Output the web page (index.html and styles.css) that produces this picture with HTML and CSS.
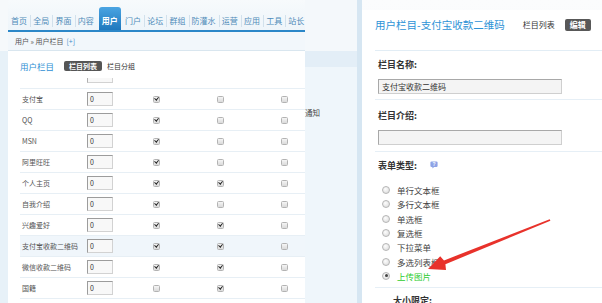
FILE: index.html
```html
<!DOCTYPE html>
<html lang="zh-CN">
<head>
<meta charset="utf-8">
<title>用户栏目</title>
<link rel="stylesheet" href="styles.css">
</head>
<body>
<div class="desk">
  <section class="left">
    <div class="win">
      <nav class="tabs">
        <a class="tab first">首页</a>
        <a class="tab">全局</a>
        <a class="tab">界面</a>
        <a class="tab">内容</a>
        <a class="tab active">用户</a>
        <a class="tab first">门户</a>
        <a class="tab">论坛</a>
        <a class="tab">群组</a>
        <a class="tab">防灌水</a>
        <a class="tab">运营</a>
        <a class="tab">应用</a>
        <a class="tab">工具</a>
        <a class="tab">站长</a>
      </nav>
      <div class="crumb">用户 » 用户栏目 <span class="plus">[+]</span></div>
      <div class="head">
        <span class="h-title">用户栏目</span>
        <span class="badge">栏目列表</span>
        <span class="h-link">栏目分组</span>
      </div>
      <div class="grid">
        <div class="row part"><span></span><span class="stub"></span></div>
        <div class="row"><span class="lbl">支付宝</span><span class="num">0</span><span></span><span class="c"><i class="cb on"></i></span><span class="c"><i class="cb"></i></span><span class="c"><i class="cb"></i></span></div>
        <div class="row"><span class="lbl">QQ</span><span class="num">0</span><span></span><span class="c"><i class="cb on"></i></span><span class="c"><i class="cb"></i></span><span class="c"><i class="cb"></i></span></div>
        <div class="row"><span class="lbl">MSN</span><span class="num">0</span><span></span><span class="c"><i class="cb on"></i></span><span class="c"><i class="cb"></i></span><span class="c"><i class="cb"></i></span></div>
        <div class="row"><span class="lbl">阿里旺旺</span><span class="num">0</span><span></span><span class="c"><i class="cb on"></i></span><span class="c"><i class="cb"></i></span><span class="c"><i class="cb"></i></span></div>
        <div class="row"><span class="lbl">个人主页</span><span class="num">0</span><span></span><span class="c"><i class="cb on"></i></span><span class="c"><i class="cb on"></i></span><span class="c"><i class="cb"></i></span></div>
        <div class="row"><span class="lbl">自我介绍</span><span class="num">0</span><span></span><span class="c"><i class="cb on"></i></span><span class="c"><i class="cb"></i></span><span class="c"><i class="cb"></i></span></div>
        <div class="row"><span class="lbl">兴趣爱好</span><span class="num">0</span><span></span><span class="c"><i class="cb on"></i></span><span class="c"><i class="cb on"></i></span><span class="c"><i class="cb"></i></span></div>
        <div class="row hl"><span class="lbl">支付宝收款二维码</span><span class="num">0</span><span></span><span class="c"><i class="cb on"></i></span><span class="c"><i class="cb on"></i></span><span class="c"><i class="cb"></i></span></div>
        <div class="row"><span class="lbl">微信收款二维码</span><span class="num">0</span><span></span><span class="c"><i class="cb on"></i></span><span class="c"><i class="cb on"></i></span><span class="c"><i class="cb"></i></span></div>
        <div class="row"><span class="lbl">国籍</span><span class="num">0</span><span></span><span class="c"><i class="cb"></i></span><span class="c"><i class="cb on"></i></span><span class="c"><i class="cb"></i></span></div>
      </div>
    </div>
  </section>

  <section class="mid">
    <div class="mid-top"></div>
    <div class="mid-band"></div>
    <div class="mid-body"><span class="notice">通知</span></div>
  </section>

  <section class="right">
    <div class="panel">
      <div class="p-head">
        <span class="p-title">用户栏目-支付宝收款二维码</span>
        <span class="p-link">栏目列表</span>
        <span class="p-badge">编辑</span>
      </div>
      <div class="sec s1">
        <div class="f-label">栏目名称:</div>
        <div class="txt">支付宝收款二维码</div>
      </div>
      <div class="sec s2">
        <div class="f-label">栏目介绍:</div>
        <div class="txt"></div>
      </div>
      <div class="sec s3">
        <div class="f-label">表单类型:
          <svg class="help" width="8" height="8" viewBox="0 0 8 8"><path d="M1.6 0.4h4.8a1.2 1.2 0 0 1 1.2 1.2v3.2a1.2 1.2 0 0 1-1.2 1.2H4.2L2.4 7.6V6H1.6A1.2 1.2 0 0 1 0.4 4.8V1.6A1.2 1.2 0 0 1 1.6 0.4z" fill="#8ea3e6"/><text x="4" y="5" font-size="5" font-weight="bold" fill="#fff" text-anchor="middle" font-family="Liberation Sans, sans-serif">?</text></svg>
        </div>
        <div class="opts">
          <div class="opt"><i class="radio"></i>单行文本框</div>
          <div class="opt"><i class="radio"></i>多行文本框</div>
          <div class="opt"><i class="radio"></i>单选框</div>
          <div class="opt"><i class="radio"></i>复选框</div>
          <div class="opt"><i class="radio"></i>下拉菜单</div>
          <div class="opt"><i class="radio"></i>多选列表框</div>
          <div class="opt sel"><i class="radio on"></i>上传图片</div>
        </div>
      </div>
      <div class="sec s4">
        <div class="f-label sub">大小限定:</div>
      </div>
    </div>
  </section>

  <svg class="arrow" width="602" height="303" viewBox="0 0 602 303">
    <polygon points="428,269 440.2,256.2 444,260.4 549.7,219.3 550.4,220.7 445.4,264.2 446,270" fill="#e8322b"/>
  </svg>
</div>
</body>
</html>
```
FILE: styles.css
```css
html, body {
  margin: 0;
  padding: 0;
}
body {
  font-family: "Noto Sans CJK SC", "Noto Sans", sans-serif;
  width: 602px;
  height: 303px;
  overflow: hidden;
  background: #eef5fa;
}
.desk {
  position: relative;
  display: flex;
  width: 602px;
  height: 303px;
  overflow: hidden;
  background: #eef5fa;
}

/* ---------- left window ---------- */
.left {
  width: 305px;
  flex: none;
  box-sizing: border-box;
  padding-left: 8px;
  background: linear-gradient(#f6f9fb 0 51px, #e7f1f8 51px);
  overflow: hidden;
}
.win {
  height: 100%;
  background: #fff;
  display: flex;
  flex-direction: column;
}
.tabs {
  display: flex;
  align-items: flex-end;
  height: 32px;
  box-sizing: border-box;
  padding-top: 7px;
  background: linear-gradient(#f7fafc, #eef5fa);
  border-bottom: 2px solid #2b87c8;
}
.tab {
  height: 23px;
  box-sizing: border-box;
  display: flex;
  align-items: center;
  padding: 5px 3.1px 0;
  font-size: 8px;
  line-height: 1;
  color: #4f8bb9;
  white-space: nowrap;
  background: linear-gradient(#d2e1ec, #d2e1ec) 0 8px / 1px 12px no-repeat;
}
.tab.first {
  background: none;
}
.tab.active {
  margin: 0 1px 0 2px;
  color: #fff;
  font-weight: bold;
  border-radius: 3px 3px 0 0;
  background: linear-gradient(#4aa4e2, #1f78bd);
}
.crumb {
  height: 19px;
  box-sizing: border-box;
  display: flex;
  align-items: center;
  gap: 3px;
  padding-left: 7px;
  background: #f2f7fb;
  border-bottom: 1px solid #d9e6ef;
  font-size: 7px;
  color: #555;
}
.plus {
  color: #3a8cc9;
}
.head {
  height: 27px;
  box-sizing: border-box;
  display: flex;
  align-items: center;
  padding: 3px 0 0 12px;
}
.h-title {
  font-size: 8.5px;
  color: #2e8fd4;
}
.badge {
  margin-left: 10px;
  padding: 0 5px;
  height: 10px;
  line-height: 10px;
  border-radius: 2px;
  background: #555;
  color: #fff;
  font-size: 7px;
  font-weight: bold;
}
.h-link {
  margin-left: 5px;
  font-size: 7px;
  color: #333;
}
.row {
  display: grid;
  grid-template-columns: 65px 26px 11px 64px 64px 64px;
  align-items: center;
  height: 21px;
  box-sizing: border-box;
  margin-left: 12px;
  padding-left: 2px;
  border-bottom: 1px solid #e7eff5;
}
.row.part {
  height: 11px;
  align-items: start;
}
.stub {
  height: 5px;
  box-sizing: border-box;
  border: 1px solid #d2d2d2;
  border-top: none;
  border-left-color: #b0b0b0;
  background: #f8f8f8;
}
.row.hl {
  background: #f0f6fb;
}
.lbl {
  font-size: 7px;
  color: #555;
  white-space: nowrap;
}
.num {
  height: 14px;
  box-sizing: border-box;
  border: 1px solid;
  border-color: #9c9c9c #d2d2d2 #d2d2d2 #9c9c9c;
  background: #f8f8f8;
  padding-left: 2px;
  font-size: 7px;
  line-height: 12px;
  color: #333;
}
.c {
  display: flex;
  justify-content: center;
}
.cb {
  position: relative;
  width: 7px;
  height: 7px;
  box-sizing: border-box;
  border: 1px solid #b3b3b3;
  border-radius: 1.5px;
  background: linear-gradient(#f5f5f5, #dadada);
}
.cb.on::after {
  content: "";
  position: absolute;
  left: 1.6px;
  top: -0.2px;
  width: 1.6px;
  height: 3.4px;
  border: solid #222;
  border-width: 0 1.3px 1.3px 0;
  transform: rotate(40deg);
}

/* ---------- background page strip ---------- */
.mid {
  width: 52px;
  flex: none;
  display: flex;
  flex-direction: column;
  background: #eff6fb;
}
.mid-top {
  height: 51px;
  background: #f4f8fb;
}
.mid-band {
  height: 16px;
  background: #e3eef7;
}
.mid-body {
  padding-top: 42px;
}
.notice {
  display: block;
  font-size: 7.5px;
  line-height: 8px;
  color: #444;
}

/* ---------- right window ---------- */
.right {
  flex: 1;
  display: flex;
  flex-direction: column;
  padding-top: 10px;
  border-left: 5px solid #d6e6f2;
  background: linear-gradient(#fbfcfd, #eef3f7);
}
.panel {
  flex: 1;
  background: #fff;
  padding-left: 13px;
}
.p-head {
  height: 41px;
  box-sizing: border-box;
  display: flex;
  align-items: flex-start;
  padding-top: 9px;
  border-bottom: 1px solid #e2edf5;
}
.p-title {
  font-size: 10.5px;
  line-height: 12px;
  color: #2d92d6;
  white-space: nowrap;
}
.p-link {
  margin-left: 18px;
  font-size: 8px;
  line-height: 12px;
  color: #333;
}
.p-badge {
  margin-left: 10px;
  padding: 0 5px;
  height: 12px;
  line-height: 12px;
  border-radius: 2px;
  background: #585858;
  color: #fff;
  font-size: 8px;
  font-weight: bold;
}
.sec {
  border-bottom: 1px solid #e6eff6;
}
.s1 {
  padding: 8px 0 5px;
}
.s2 {
  padding: 10px 0 6px;
}
.s3 {
  padding: 8px 0 4px;
}
.s4 {
  border-bottom: none;
  padding-top: 7px;
}
.f-label {
  display: flex;
  align-items: center;
  height: 10px;
  padding-left: 3px;
  font-size: 9px;
  font-weight: bold;
  color: #333;
  white-space: nowrap;
}
.f-label.sub {
  padding-left: 18px;
}
.help {
  margin-left: 13px;
}
.txt {
  margin: 10px 0 0 3px;
  width: 184px;
  height: 15px;
  box-sizing: border-box;
  border: 1px solid #a8a8a8;
  border-right-color: #cfcfcf;
  border-bottom-color: #cfcfcf;
  background: #f4f4f4;
  padding-left: 3px;
  font-size: 8px;
  line-height: 13px;
  color: #333;
}
.opts {
  margin-top: 13px;
}
.opt {
  display: flex;
  align-items: center;
  height: 14.3px;
  padding-left: 7px;
  font-size: 8.5px;
  color: #444;
}
.opt.sel {
  color: #2ecc2e;
}
.radio {
  position: relative;
  width: 8px;
  height: 8px;
  box-sizing: border-box;
  margin-right: 7px;
  border-radius: 50%;
  border: 1px solid #b5b5b5;
  background: radial-gradient(circle at 40% 35%, #fdfdfd, #d8d8d8);
}
.radio.on::after {
  content: "";
  position: absolute;
  left: 1.5px;
  top: 1.5px;
  width: 3px;
  height: 3px;
  border-radius: 50%;
  background: #444;
}

/* ---------- annotation ---------- */
.arrow {
  position: absolute;
  left: 0;
  top: 0;
  pointer-events: none;
}
```
